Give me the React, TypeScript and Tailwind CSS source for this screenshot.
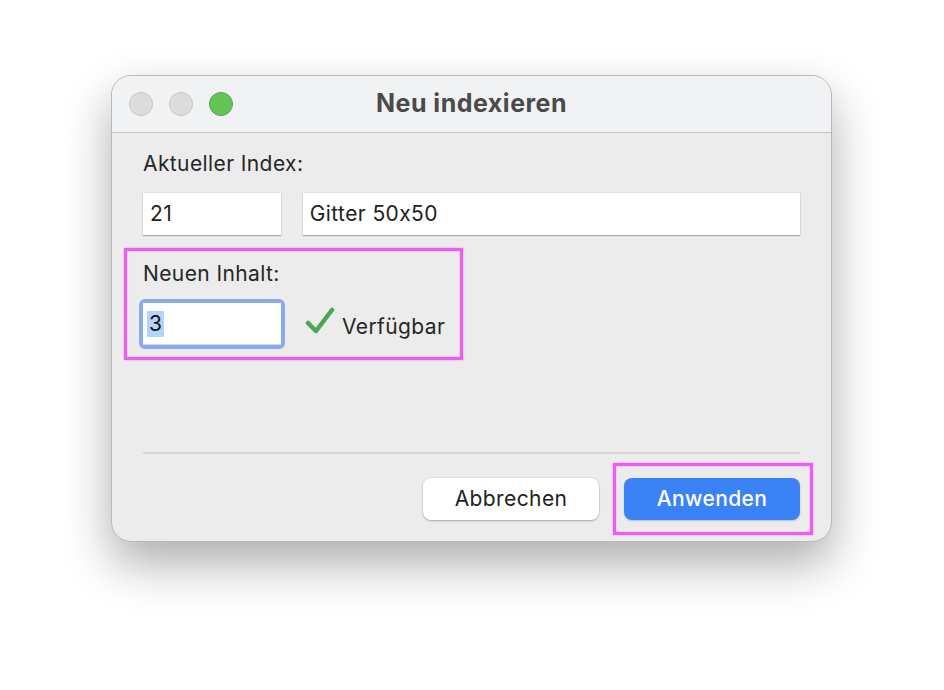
import React from "react";

export default function App() {
  return (
    <div className="w-[944px] h-[690px] bg-white relative overflow-hidden font-['Inter','Liberation_Sans',sans-serif] [font-feature-settings:'calt'_0]">
      <div className="pt-[75px] pl-[111px]">
        <div className="w-[721px] h-[467px] rounded-[20px] border border-[#b9b9b9] bg-[#ececec] shadow-[0_22px_48px_rgba(0,0,0,0.32)] overflow-hidden flex flex-col">
          {/* title bar */}
          <div className="h-[57px] shrink-0 bg-[#f1f2f3] border-b border-[#c4c4c4] relative flex items-center justify-center">
            <div className="absolute left-[17px] top-[16px] flex gap-[16px]">
              <div className="w-[24px] h-[24px] rounded-full bg-[#dcdcdd] border border-[#c5c5c6]" />
              <div className="w-[24px] h-[24px] rounded-full bg-[#dcdcdd] border border-[#c5c5c6]" />
              <div className="w-[24px] h-[24px] rounded-full bg-[#62c554] border border-[#52a944]" />
            </div>
            <span className="text-[25px] font-bold text-[#4a4a4a] tracking-[0.5px] -mt-[1px]">Neu indexieren</span>
          </div>
          {/* body */}
          <div className="flex-1 flex flex-col px-[31px] pt-[20px] text-[21px] tracking-[0.4px]">
            <div className="text-[#262626] leading-[22px]">Aktueller Index:</div>
            <div className="flex gap-[22px] mt-[18px]">
              <div className="w-[138px] h-[42px] bg-white shadow-[0_1px_1px_rgba(0,0,0,0.25),0_0_0_0.5px_rgba(0,0,0,0.08)] flex items-center px-[7px] text-[#222]">21</div>
              <div className="w-[498px] h-[42px] bg-white shadow-[0_1px_1px_rgba(0,0,0,0.25),0_0_0_0.5px_rgba(0,0,0,0.08)] flex items-center px-[7px] text-[#222]">Gitter 50x50</div>
            </div>
            <div className="text-[#262626] leading-[22px] mt-[28px]">Neuen Inhalt:</div>
            <div className="flex items-center mt-[14px] -ml-[4px]">
              <div className="w-[146px] h-[50px] rounded-[6px] bg-[#8aa9f0] p-[4px]">
                <div className="w-full h-full bg-white flex items-center px-[4px] text-[#111] shadow-[inset_0_-1px_0_rgba(0,0,0,0.15)]">
                  <span className="bg-[#b4d3fb] px-[2px] leading-[26px]">3</span>
                </div>
              </div>
              <svg width="30" height="28" viewBox="0 0 30 28" className="ml-[20px] -mt-[6px]">
                <path d="M3 16 L11 24 L27 3" fill="none" stroke="#4aa554" strokeWidth="4.5" strokeLinecap="round" strokeLinejoin="round" />
              </svg>
              <span className="ml-[7px] text-[#262626] mt-[5px]">Verfügbar</span>
            </div>
            <div className="flex-1" />
            <div className="h-[2px] bg-[#d6d6d6]" />
            <div className="flex justify-end gap-[25px] pt-[24px] pb-[21px]">
              <div className="w-[176px] h-[42px] rounded-[8px] bg-white shadow-[0_1px_2px_rgba(0,0,0,0.25),0_0_0_0.5px_rgba(0,0,0,0.1)] flex items-center justify-center text-[#222]">Abbrechen</div>
              <div className="w-[176px] h-[42px] rounded-[8px] bg-[#3b82f6] shadow-[0_1px_2px_rgba(0,0,0,0.2)] flex items-center justify-center text-white font-medium">Anwenden</div>
            </div>
          </div>
        </div>
      </div>
      {/* annotations */}
      <div className="absolute left-[124px] top-[248px] w-[339px] h-[112px] border-[3px] border-[#ea5ef0] shadow-[0_0_2px_#f08af5,inset_0_0_2px_#f08af5]" />
      <div className="absolute left-[613px] top-[463px] w-[200px] h-[72px] border-[3px] border-[#ea5ef0] shadow-[0_0_2px_#f08af5,inset_0_0_2px_#f08af5]" />
    </div>
  );
}
